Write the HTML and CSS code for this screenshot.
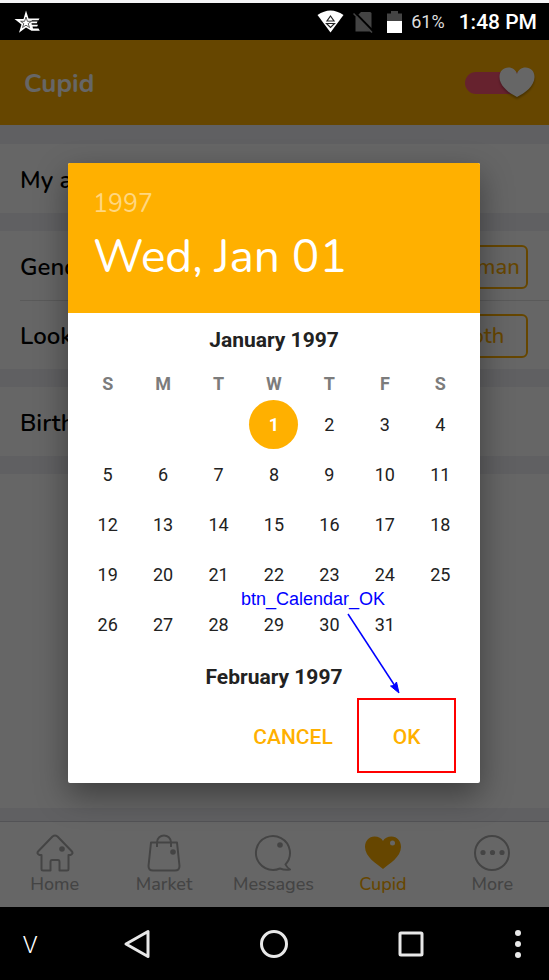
FILE: index.html
```html
<!DOCTYPE html>
<html lang="en">
<head>
<meta charset="utf-8">
<meta name="viewport" content="width=device-width, initial-scale=1">
<title>Cupid</title>
<link rel="stylesheet" href="styles.css">
</head>
<body>
<div class="statusbar">
  <svg class="star" width="28" height="24" viewBox="0 0 28 24" aria-hidden="true">
    <path d="M12 0.500L14.500 8.500H25.500L24.500 10.300H18L17 11.600H23.500L22.800 13.200H17.500L17.800 14.800H24L23.200 16.400H18.500L19 18.500H24.500L25.800 20.800H17.500L12 17.500L5 22.800L7.500 14.500L0.500 9H9.500z" fill="#fff"/>
    <path d="M12 7l1.400 4.300h4l-3.200 2.300 1.300 3.900-3.500-2.300-3.500 2.300 1.300-3.900-3.200-2.300h4z" fill="#fff" stroke="#333" stroke-width=".8"/>
  </svg>
  <div class="indicators">
    <svg width="27" height="23" viewBox="0 0 27 23" aria-hidden="true">
      <path d="M0.500 5Q13.500-4 26.500 5L13.500 22.500z" fill="#fff"/>
      <path d="M13.500 6l3.500 5h-7zM9.500 13.500h8l-4 4z" fill="#fff" stroke="#222" stroke-width="1.200"/>
    </svg>
    <svg class="sim" width="20" height="22" viewBox="0 0 20 22" aria-hidden="true">
      <path d="M8 1h9q1.500 0 1.500 1.500V20.500h-16V6.500z" fill="#444"/>
      <path d="M1 0.500L20 20" stroke="#000" stroke-width="2"/>
      <path d="M0.500 2.500L19 21.500" stroke="#444" stroke-width="1.500"/>
    </svg>
    <svg class="battery" width="15" height="22" viewBox="0 0 15 22" aria-hidden="true">
      <path d="M0 2.500h4V0h7v2.500h4V10H0z" fill="#444"/>
      <path d="M0 10h15v12H0z" fill="#fff"/>
    </svg>
    <span class="percent">61%</span>
    <span class="clock">1:48 PM</span>
  </div>
</div>

<main class="app">
  <header class="appbar">
    <h1>Cupid</h1>
    <label class="toggle">
      <input type="checkbox" checked aria-label="Cupid enabled">
      <svg class="heart" width="36" height="31" viewBox="0 0 36 31" aria-hidden="true">
        <path d="M18 30C10 26 0.500 19 0.500 10C0.500 4 4.500 0.500 9.500 0.500C13.500 0.500 17 3 18 7C19 3 22.500 0.500 26.500 0.500C31.500 0.500 35.500 4 35.500 10C35.500 19 26 26 18 30z" fill="#fff"/>
      </svg>
    </label>
  </header>

  <div class="content">
    <section class="group"><div class="row">My age</div></section>
    <section class="group">
      <div class="row"><span>Gender</span><button class="choice" type="button">Woman</button></div>
      <div class="row divided"><span>Looking for</span><button class="choice" type="button">Both</button></div>
    </section>
    <section class="group"><div class="row">Birthday</div></section>
    <section class="group blank"></section>
  </div>

  <nav class="tabs">
    <a href="#home">
      <svg width="38" height="38" viewBox="0 0 38 38" aria-hidden="true">
        <path d="M5.500 21H3.500Q0 19.500 2.500 17L16.500 2.500Q19 0.500 21.500 2.500L35.500 17Q38 19.500 34.500 21H32.500V35Q32.500 36.500 31 36.500H23.500V28Q23.500 26 22 26H16Q14.500 26 14.500 28V36.500H7Q5.500 36.500 5.500 35z" fill="none" stroke="currentColor" stroke-width="2" stroke-linejoin="round"/>
        <circle cx="26" cy="15" r="2.800" fill="currentColor"/>
      </svg>
      Home</a>
    <a href="#market">
      <svg width="38" height="38" viewBox="0 0 38 38" aria-hidden="true">
        <path d="M6 8.500H32L34.500 32Q34.500 36.500 30 36.500H8Q3.500 36.500 3.500 32zM12 13V8.500C12-1 26-1 26 8.500V13" fill="none" stroke="currentColor" stroke-width="2" stroke-linejoin="round"/>
        <circle cx="28" cy="18" r="2.800" fill="currentColor"/>
      </svg>
      Market</a>
    <a href="#messages">
      <svg width="38" height="38" viewBox="0 0 38 38" aria-hidden="true">
        <path d="M19 36A17 17 0 1 1 31.500 30.500Q32.500 33 36 35.500Q31 36.500 26 34.500Q22.500 36 19 36z" fill="none" stroke="currentColor" stroke-width="2" stroke-linejoin="round"/>
        <circle cx="26" cy="11" r="2.800" fill="currentColor"/>
      </svg>
      Messages</a>
    <a href="#cupid" class="active" aria-current="page">
      <svg width="38" height="38" viewBox="0 0 38 38" aria-hidden="true">
        <path d="M19 35C13 30 1 23 1 13C1 7 5 2.500 10.500 2.500C14.500 2.500 17.500 4 19 7C20.500 4 23.500 2.500 27.500 2.500C33 2.500 37 7 37 13C37 23 25 30 19 35z" fill="currentColor"/>
        <circle cx="28.500" cy="9" r="2.500" fill="#fff"/>
      </svg>
      Cupid</a>
    <a href="#more">
      <svg width="38" height="38" viewBox="0 0 38 38" aria-hidden="true">
        <circle cx="19" cy="19" r="17" fill="none" stroke="currentColor" stroke-width="2"/>
        <circle cx="10" cy="18.500" r="2.600" fill="currentColor"/><circle cx="19.500" cy="18.500" r="2.600" fill="currentColor"/><circle cx="29" cy="18.500" r="2.600" fill="currentColor"/>
      </svg>
      More</a>
  </nav>

  <div class="scrim">
    <div class="dialog" role="dialog" aria-label="Choose a date">
      <div class="picked">
        <div class="year">1997</div>
        <div class="date">Wed, Jan 01</div>
      </div>
      <table class="month">
        <caption>January 1997</caption>
        <thead><tr><th>S</th><th>M</th><th>T</th><th>W</th><th>T</th><th>F</th><th>S</th></tr></thead>
        <tbody>
          <tr><td></td><td></td><td></td><td><span class="selected">1</span></td><td>2</td><td>3</td><td>4</td></tr>
          <tr><td>5</td><td>6</td><td>7</td><td>8</td><td>9</td><td>10</td><td>11</td></tr>
          <tr><td>12</td><td>13</td><td>14</td><td>15</td><td>16</td><td>17</td><td>18</td></tr>
          <tr><td>19</td><td>20</td><td>21</td><td>22</td><td>23</td><td>24</td><td>25</td></tr>
          <tr><td>26</td><td>27</td><td>28</td><td>29</td><td>30</td><td>31</td><td></td></tr>
        </tbody>
      </table>
      <div class="month-title">February 1997</div>
      <div class="actions">
        <button type="button">CANCEL</button>
        <div class="ok">
          <button type="button">OK</button>
          <div class="marker"></div>
          <div class="note">btn_Calendar_OK</div>
          <svg class="arrow" width="54" height="82" viewBox="0 0 54 82" aria-hidden="true">
            <path d="M1 1L48 73" stroke="#00f" stroke-width="1.500"/>
            <path d="M52 80L43.500 73L47 72.500L49.500 69z" fill="#00f" stroke="#00f"/>
          </svg>
        </div>
      </div>
    </div>
  </div>
</main>

<div class="sysnav">
  <button type="button" class="hide" aria-label="Hide">V</button>
  <button type="button" aria-label="Back"><svg width="28" height="30" viewBox="0 0 28 30"><path d="M25 2.500V27.500L3 15z" fill="none" stroke="#e8e8e8" stroke-width="3" stroke-linejoin="round"/></svg></button>
  <button type="button" aria-label="Home"><svg width="30" height="30" viewBox="0 0 30 30"><circle cx="15" cy="15" r="12.500" fill="none" stroke="#e8e8e8" stroke-width="3"/></svg></button>
  <button type="button" aria-label="Recent"><svg width="28" height="28" viewBox="0 0 28 28"><rect x="3" y="3" width="22" height="22" rx="1" fill="none" stroke="#e8e8e8" stroke-width="3"/></svg></button>
  <button type="button" class="menu" aria-label="Menu"><svg width="8" height="30" viewBox="0 0 8 30"><g fill="#e8e8e8"><circle cx="4" cy="4" r="3"/><circle cx="4" cy="15" r="3"/><circle cx="4" cy="26" r="3"/></g></svg></button>
</div>
</body>
</html>
```
FILE: styles.css
```css
* { box-sizing: border-box; }

body {
  margin: 0;
  min-height: 100vh;
  display: flex;
  flex-direction: column;
  border-top: 3px solid #f4f4f6;
  background: #000;
  font-family: Nunito, Lato, sans-serif;
}

button {
  border: 0;
  padding: 0;
  background: none;
  font: inherit;
  color: inherit;
}

.statusbar {
  height: 37px;
  padding: 0 12px 0 14px;
  display: flex;
  align-items: center;
  justify-content: space-between;
  color: #fff;
  font-family: Roboto, sans-serif;
}
.indicators { display: flex; align-items: center; }
.sim { margin-left: 9px; }
.battery { margin-left: 14px; }
.percent { margin-left: 9px; font-size: 18px; color: #ddd; }
.clock { margin-left: 14px; font-size: 21px; font-weight: 500; }

.app {
  flex: 1;
  position: relative;
  display: flex;
  flex-direction: column;
  background: #efeff4;
}
.appbar {
  height: 85px;
  padding: 0 14px 0 24px;
  display: flex;
  align-items: center;
  justify-content: space-between;
  background: #ffb000;
  color: #fff;
}
.appbar h1 { margin: 0; padding-top: 2px; font-size: 26px; font-weight: 700; }

.toggle { position: relative; display: block; }
.toggle input {
  appearance: none;
  display: block;
  width: 60px;
  height: 22px;
  margin: 0 10px 0 0;
  border-radius: 11px;
  background: #ff5573;
}
.heart {
  position: absolute;
  right: 0;
  top: -5px;
  filter: drop-shadow(0 2px 1px rgba(0, 0, 0, .3));
}

.content {
  flex: 1;
  padding: 19px 0 13px;
  display: flex;
  flex-direction: column;
  gap: 18px;
}
.group { padding-left: 20px; background: #fff; }
.blank { flex: 1; }
.row {
  min-height: 69px;
  padding: 2px 21px 0 0;
  display: flex;
  align-items: center;
  justify-content: space-between;
  font-size: 24px;
  font-weight: 600;
  line-height: 24px;
  color: #000;
}
.divided { border-top: 1px solid #e2e2e2; }
.choice {
  width: 95px;
  height: 44px;
  border: 2px solid #ffb000;
  border-radius: 6px;
  font-size: 22px;
  font-weight: 500;
  color: #ffb000;
}

.tabs {
  height: 86px;
  border-top: 1px solid #cfcfd6;
  padding-right: 2px;
  display: grid;
  grid-template-columns: repeat(5, 1fr);
  background: #fff;
}
.tabs a {
  padding-top: 12px;
  display: flex;
  flex-direction: column;
  align-items: center;
  font-size: 18px;
  font-weight: 500;
  line-height: 24px;
  color: #aaa;
  text-decoration: none;
}
.tabs .active { color: #ffb000; }

.scrim {
  position: absolute;
  inset: 0;
  padding: 0 1px 2px 0;
  display: flex;
  align-items: center;
  justify-content: center;
  background: rgba(0, 0, 0, .6);
}
.dialog {
  width: 75.2%;
  border-radius: 2px;
  background: #fff;
  box-shadow: 0 12px 32px rgba(0, 0, 0, .4);
  font-family: Roboto, sans-serif;
  color: #222;
}
.picked {
  height: 150px;
  padding: 28px 25px 0;
  border-radius: 2px 2px 0 0;
  background: #ffb000;
  color: #fff;
  font-family: Nunito, Lato, sans-serif;
}
.year { font-size: 25px; line-height: 26px; color: #ffd780; }
.date { margin-top: 10px; font-size: 46px; line-height: 60px; white-space: nowrap; }

.month {
  width: calc(100% - 24px);
  margin: 0 auto;
  table-layout: fixed;
  border-collapse: collapse;
  text-align: center;
}
.month caption,
.month-title {
  font-size: 21px;
  font-weight: 700;
  line-height: 54px;
  text-align: center;
}
.month th { height: 33px; padding: 0; font-size: 18px; font-weight: 700; color: #7c7c7c; }
.month td { height: 50px; padding: 0; font-size: 18px; }
.selected {
  display: block;
  width: 49px;
  margin: 0 auto;
  border-radius: 50%;
  background: #ffb000;
  color: #fff;
  font-weight: 700;
  line-height: 49px;
}

.actions {
  padding: 0 24px 13px 0;
  display: flex;
  justify-content: flex-end;
  gap: 8px;
  font-size: 21px;
  font-weight: 500;
  color: #ffb000;
}
.actions button { width: 112px; height: 66px; }
.ok { position: relative; }
.actions .ok button { width: 99px; }

/* Callout drawn over the dialog */
.marker {
  position: absolute;
  inset: -6px 0 -3px;
  border: 2px solid #f00;
  pointer-events: none;
}
.note {
  position: absolute;
  right: 71px;
  top: -116px;
  font: 18px/22px "Liberation Sans", sans-serif;
  color: #00f;
}
.arrow { position: absolute; left: -10px; top: -91px; }

.sysnav {
  height: 73px;
  padding-right: 1px;
  display: grid;
  grid-template-columns: 1fr 2fr 2fr 2fr 1fr;
  color: #fff;
}
.sysnav button { display: flex; align-items: center; justify-content: center; }
.sysnav .hide { padding: 2px 8px 0 0; font: 300 24px Roboto, sans-serif; }
.sysnav .menu { padding-left: 8px; }
```
